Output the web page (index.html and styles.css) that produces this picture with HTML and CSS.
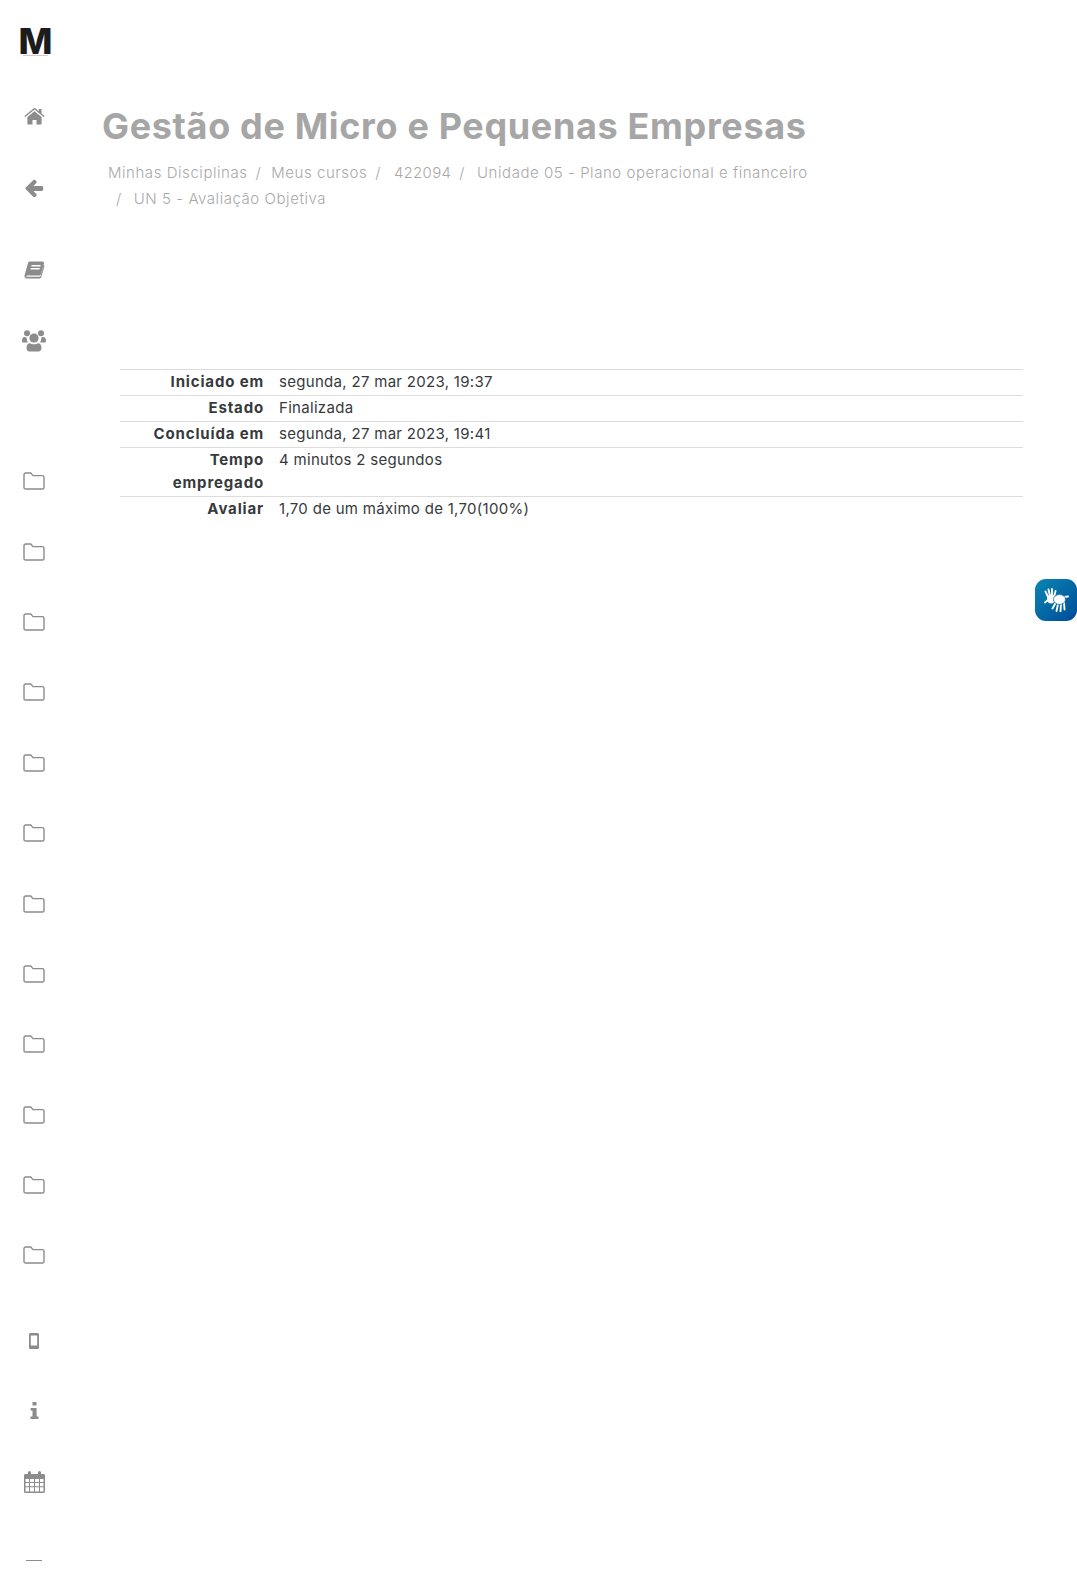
FILE: index.html
```html
<!DOCTYPE html>
<html lang="pt-BR">
<head>
<meta charset="utf-8">
<title>UN 5 - Avaliação Objetiva</title>
<link rel="stylesheet" href="styles.css">
</head>
<body>
<svg class="defs" width="0" height="0" aria-hidden="true">
  <symbol id="folder" viewBox="0 0 22 18"><path d="M2.6 1h5.2l2.2 2.6h9.4a1.6 1.6 0 0 1 1.6 1.6v10.2a1.6 1.6 0 0 1-1.6 1.6H2.6A1.6 1.6 0 0 1 1 15.4V2.6A1.6 1.6 0 0 1 2.6 1z" fill="none" stroke="currentColor" stroke-width="1.4" stroke-linejoin="round"/></symbol>
</svg>
<div class="page">
  <aside class="sidebar">
    <a class="logo"><span class="logo-m">M</span></a>
    <nav class="nav">
      <a class="nav-item h-top"><svg class="ico" width="21" height="17" viewBox="0 0 21 17"><path fill="currentColor" d="M10.5 3.2 3.4 9.1v6.6c0 .5.4.9.9.9h4.2v-4.6h4v4.6h4.2c.5 0 .9-.4.9-.9V9.1zM20.6 8 17.5 5.4V1h-2.7v2.2L11.2.3a1.1 1.1 0 0 0-1.4 0L.4 8l.9 1.1 9.2-7.6 9.2 7.6z"/></svg></a>
      <a class="nav-item h-back"><svg class="ico" width="19" height="19" viewBox="0 0 19 19"><path fill="currentColor" d="M8.2 1.2 1 8.3a1.6 1.6 0 0 0 0 2.3l7.2 7.2c.6.6 1.6.6 2.2 0l.8-.8c.6-.6.6-1.6 0-2.2L8.3 11.9h8.3c.9 0 1.6-.7 1.6-1.6V8.7c0-.9-.7-1.6-1.6-1.6H8.3l2.9-2.9c.6-.6.6-1.6 0-2.2l-.8-.8c-.6-.6-1.6-.6-2.2 0z"/></svg></a>
      <a class="nav-item h-book"><svg class="ico" width="21" height="19" viewBox="0 0 21 19"><path fill="currentColor" d="M6 .5h12.3c1.3 0 2 .9 1.6 2.2l-3 10.4c-.3 1-1.1 1.5-2.1 1.5H3.3c-1 0-1.2.9-.4 1.2h12.3c.7 0 1.2-.3 1.4-.9l3.1-10.8.9.6-3.2 11c-.3 1.1-1.2 1.9-2.4 1.9H3c-1.8 0-3-1.6-2.4-3.4L4 2c.3-.9 1-1.5 2-1.5z"/><path fill="#fff" d="M7.6 4h9.2l-.4 1.5H7.2zM6.7 7h9.2l-.4 1.5H6.3z"/></svg></a>
      <a class="nav-item h-users"><svg class="ico" width="24" height="22" viewBox="0 0 24 22"><circle cx="5" cy="3.2" r="3" fill="currentColor"/><circle cx="19" cy="3.2" r="3" fill="currentColor"/><path fill="currentColor" d="M0 11c0-2.500 1-4 2.600-4 .8 0 1.500.3 2.200.8-.2.700-.2 2.900 1.200 4.700H1.500C.6 12.500 0 12 0 11zM24 11c0-2.500-1-4-2.600-4-.8 0-1.500.3-2.200.8.2.700.2 2.900-1.200 4.700h4.500c.9 0 1.500-.5 1.500-1.500z"/><circle cx="12" cy="8" r="4.600" fill="currentColor"/><path fill="currentColor" d="M8 13.200c1 .7 2.500 1.100 4 1.100s3-.4 4-1.100c2.200 0 3.500 2 3.500 4.800 0 2.200-1.200 3.500-3 3.500H7.500c-1.800 0-3-1.300-3-3.500 0-2.800 1.300-4.800 3.500-4.800z"/></svg></a>
      <div class="folders">
        <a class="nav-item h-folder"><svg class="ico" width="22" height="18"><use href="#folder"/></svg></a>
        <a class="nav-item h-folder"><svg class="ico" width="22" height="18"><use href="#folder"/></svg></a>
        <a class="nav-item h-folder"><svg class="ico" width="22" height="18"><use href="#folder"/></svg></a>
        <a class="nav-item h-folder"><svg class="ico" width="22" height="18"><use href="#folder"/></svg></a>
        <a class="nav-item h-folder"><svg class="ico" width="22" height="18"><use href="#folder"/></svg></a>
        <a class="nav-item h-folder"><svg class="ico" width="22" height="18"><use href="#folder"/></svg></a>
        <a class="nav-item h-folder"><svg class="ico" width="22" height="18"><use href="#folder"/></svg></a>
        <a class="nav-item h-folder"><svg class="ico" width="22" height="18"><use href="#folder"/></svg></a>
        <a class="nav-item h-folder"><svg class="ico" width="22" height="18"><use href="#folder"/></svg></a>
        <a class="nav-item h-folder"><svg class="ico" width="22" height="18"><use href="#folder"/></svg></a>
        <a class="nav-item h-folder"><svg class="ico" width="22" height="18"><use href="#folder"/></svg></a>
        <a class="nav-item h-folder"><svg class="ico" width="22" height="18"><use href="#folder"/></svg></a>
      </div>
      <a class="nav-item h-phone"><svg class="ico" width="10" height="16" viewBox="0 0 10 16"><path fill="currentColor" fill-rule="evenodd" d="M1.600 0h6.800C9.300 0 10 .7 10 1.600v12.800c0 .9-.7 1.600-1.600 1.600H1.600C.7 16 0 15.300 0 14.400V1.600C0 .7.7 0 1.600 0zM1.800 2.600v10h6.400v-10z"/></svg></a>
      <a class="nav-item h-info"><svg class="ico" width="9" height="17" viewBox="0 0 9 17"><path fill="currentColor" d="M2.500 0h4v3.500h-4zM.6 6h6v8.500h1.900V17H.5v-2.500h2V8.500H.6z"/></svg></a>
      <a class="nav-item h-cal"><svg class="ico" width="21" height="22" viewBox="0 0 21 22"><path fill="currentColor" fill-rule="evenodd" d="M1.500 3H4V1.500a1.500 1.500 0 0 1 3 0V3h7V1.500a1.500 1.500 0 0 1 3 0V3h2.500C20.300 3 21 3.700 21 4.500v16c0 .8-.7 1.500-1.500 1.500h-18C.700 22 0 21.300 0 20.500v-16C0 3.700.7 3 1.500 3zM1.500 8v3h3.500V8zM6 8v3h4V8zM11 8v3h4V8zM16 8v3h3.500V8zM1.500 12v3.200h3.500V12zM6 12v3.200h4V12zM11 12v3.200h4V12zM16 12v3.200h3.500V12zM1.500 16.200v4.300h3.500v-4.300zM6 16.200v4.300h4v-4.300zM11 16.200v4.300h4v-4.300zM16 16.200v4.300h3.500v-4.300z"/></svg></a>
      <a class="nav-item h-last"><span class="dash"></span></a>
    </nav>
  </aside>
  <main class="main">
    <h1 class="title">Gestão de Micro e Pequenas Empresas</h1>
    <ol class="crumbs">
      <li class="crumb first">Minhas Disciplinas</li>
      <li class="crumb"><span class="sep">/</span>Meus cursos</li>
      <li class="crumb num"><span class="sep">/</span>422094</li>
      <li class="crumb wide"><span class="sep">/</span>Unidade 05 - Plano operacional e financeiro</li>
      <li class="crumb wide"><span class="sep">/</span>UN 5 - Avaliação Objetiva</li>
    </ol>
    <table class="summary">
      <tbody>
        <tr><th>Iniciado em</th><td>segunda, 27 mar 2023, 19:37</td></tr>
        <tr><th>Estado</th><td>Finalizada</td></tr>
        <tr><th>Concluída em</th><td>segunda, 27 mar 2023, 19:41</td></tr>
        <tr><th>Tempo empregado</th><td>4 minutos 2 segundos</td></tr>
        <tr><th>Avaliar</th><td>1,70 de um máximo de 1,70(100%)</td></tr>
      </tbody>
    </table>
  </main>
</div>
<a class="libras" aria-label="Libras"><svg width="25" height="24" viewBox="0 0 25 24"><g fill="none" stroke="#fff" stroke-linecap="round" stroke-width="1.900"><path d="M4 9 1.500 3.500M6 8 4.500 1.500M8 8V1M10 9l1.500-6M4 12 1 14.500"/></g><ellipse cx="7" cy="11" rx="4" ry="4.500" fill="#fff"/><g fill="none" stroke="#0b6fa8" stroke-linecap="round" stroke-width="3.400"><path d="M14 12h2"/></g><g fill="none" stroke="#fff" stroke-linecap="round" stroke-width="1.900"><path d="M11.500 15 8.500 20.500M14 16l-1.500 7M17 16l-.5 7.500M20 14.500l.5 7M20 9l4-.5"/></g><ellipse cx="15.500" cy="11.500" rx="6" ry="5" fill="#fff" stroke="#0b6fa8" stroke-width=".8"/></svg></a>
</body>
</html>
```
FILE: styles.css
```css
* { box-sizing: border-box; }
html, body { margin: 0; padding: 0; background: #fff; }
body {
  height: 1571px;
  overflow: hidden;
  font-family: Inter, "Open Sans", sans-serif;
  color: #373a3c;
}
.defs { position: absolute; }
.page { display: flex; height: 1571px; overflow: hidden; }

.sidebar { width: 68px; flex: none; display: flex; flex-direction: column; color: #8c8c8c; }
.logo { flex: none; height: 56px; margin-top: 26px; width: 100%; display: flex; justify-content: center; padding-left: 3px; position: relative; }
.logo-m {
  font-family: Inter, sans-serif; font-weight: 800; font-size: 36px; line-height: 30px; height: 30px;
  color: #1c1c1c;
}
.logo::after {
  content: ""; position: absolute; left: 23px; top: 29px; width: 25px; height: 1px; background: #e6c4c4;
}
.nav { flex: none; display: flex; flex-direction: column; }
.nav-item { flex: none; display: flex; align-items: center; justify-content: center; }
.ico { display: block; }
.h-top { height: 68px; }
.h-back { height: 76px; }
.h-book { height: 88px; }
.h-users { height: 53px; }
.folders { flex: none; display: flex; flex-direction: column; margin-top: 79px; }
.h-folder { height: 70.4px; }
.h-phone { height: 70px; margin-top: 15px; }
.h-info { height: 70px; }
.h-cal { height: 72px; }
.h-last { height: 60px; align-items: flex-start; padding-top: 42px; }
.dash { display: block; width: 16px; height: 1px; background: #8c8c8c; }

.main { flex: 1; min-width: 0; padding: 100px 54px 0 34px; }
.title {
  margin: 0 0 8px;
  font-size: 36px; line-height: 52px; font-weight: 700; color: #a6a6a6; letter-spacing: 0.65px;
}
.crumbs {
  list-style: none; margin: 0 0 0 6px; padding: 0; width: 710px;
  display: flex; flex-wrap: wrap;
  font-size: 15px; line-height: 26px; font-weight: 300; color: #a9a9a9; letter-spacing: 0.55px;
}
.crumb { padding-left: 8px; white-space: nowrap; }
.crumb.first { padding-left: 0; }
.crumb.num { letter-spacing: 0.3px; }
.crumb.num .sep { margin-right: 13px; }
.crumb.wide .sep { margin-right: 12px; }
.sep { margin-right: 10px; }

.summary {
  margin: 157px 0 0 18px; width: 903px;
  border-collapse: collapse; font-size: 15px; line-height: 23px;
  letter-spacing: 0.3px;
}
.summary tr { border-top: 1px solid #dcdcdc; }
.summary th {
  width: 144px; padding: 0 0 2px; text-align: right; font-weight: 700; color: #373a3c; vertical-align: top;
  letter-spacing: 0.85px;
}
.summary td { padding: 0 0 2px 15px; font-weight: 400; vertical-align: top; }

.libras {
  position: fixed; left: 1035px; top: 579px; width: 42px; height: 42px; border-radius: 11px;
  background: linear-gradient(135deg, #0a86b4, #004b97);
  display: flex; align-items: center; justify-content: center;
}
```
